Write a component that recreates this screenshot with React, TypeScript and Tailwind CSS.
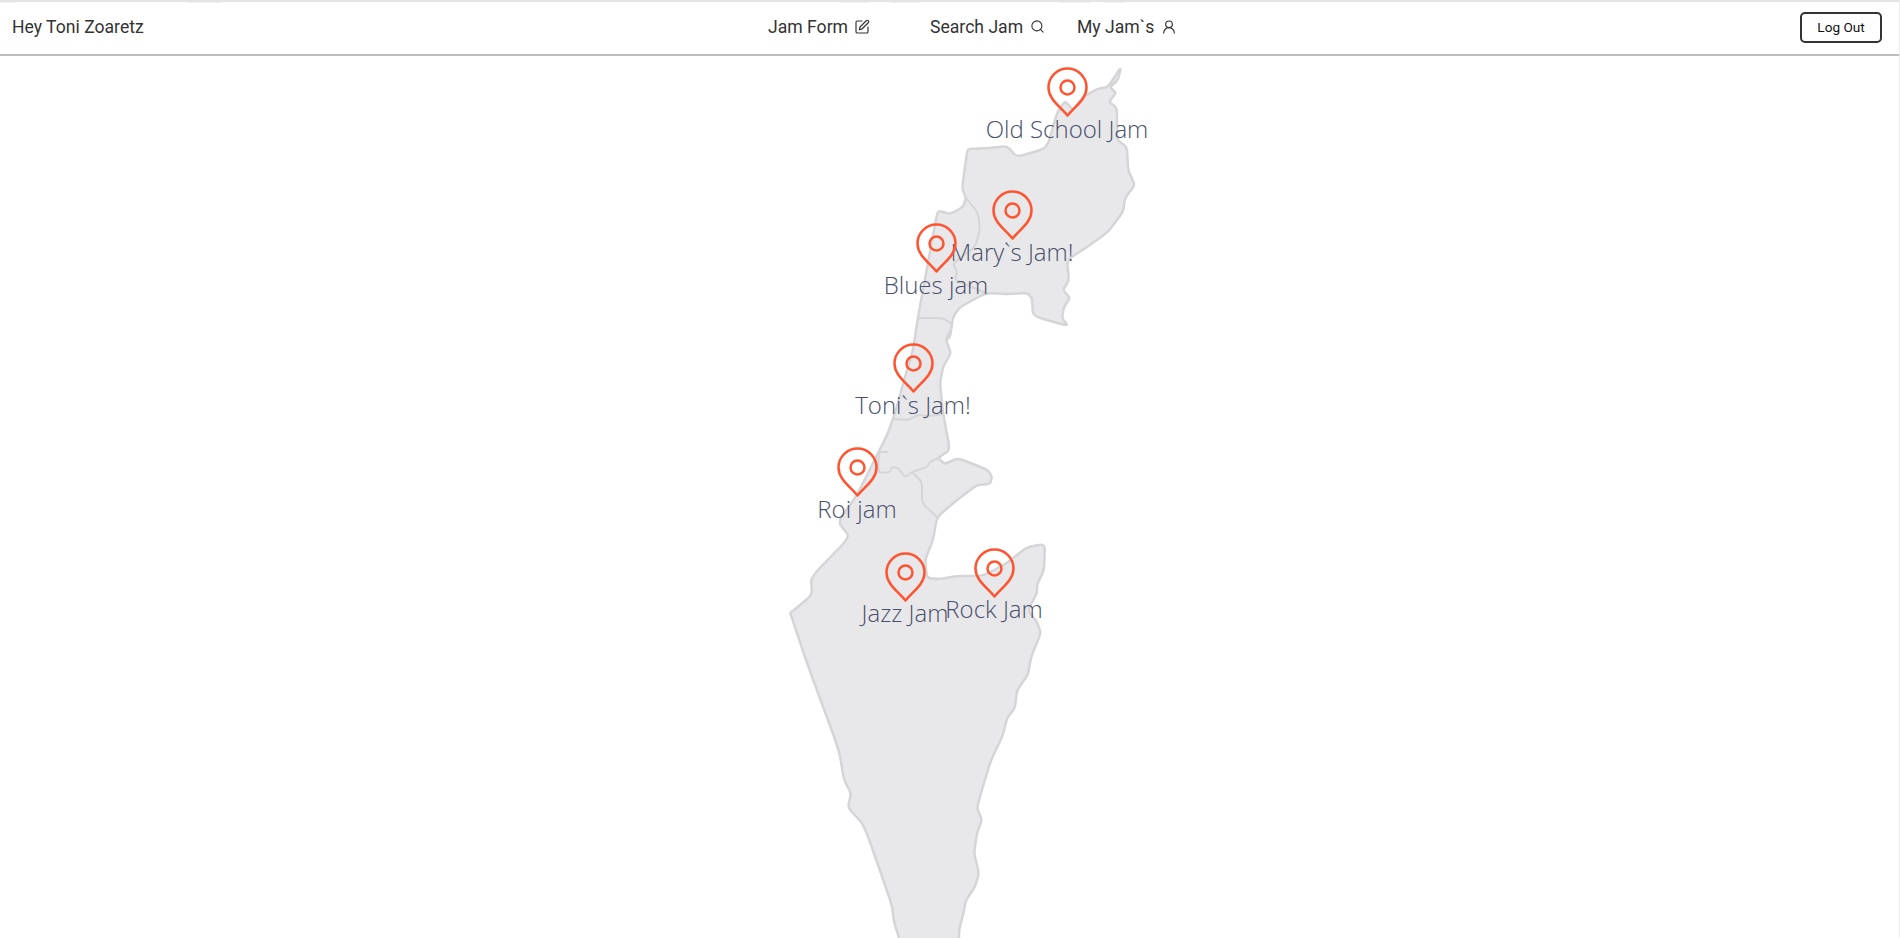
import { Search, SquarePen, UserRound } from "lucide-react";

// outline traced from the reference, in page pixels
const outline: [number, number][] = [
  [1121, 67], [1118, 80], [1110, 87], [1116, 93], [1109, 102], [1117, 108], [1117, 140], [1127, 147],
  [1128, 170], [1135, 185], [1125, 198], [1123, 212], [1108, 232], [1090, 245], [1067, 260], [1069, 280],
  [1063, 290], [1070, 298], [1064, 307], [1062, 318], [1068, 326], [1033, 316], [1032, 298], [1027, 293],
  [1007, 294], [986, 293], [960, 307], [953, 317], [950, 337], [946, 340], [951, 353], [943, 367],
  [940, 383], [943, 413], [950, 450], [938, 458], [945, 464], [958, 458], [988, 470], [992, 477],
  [990, 484], [977, 485], [957, 500], [937, 517], [933, 540], [925, 560], [927, 578], [940, 579],
  [957, 576], [983, 576], [1007, 563], [1027, 547], [1045, 544], [1044, 570], [1037, 585], [1037, 593],
  [1028, 610], [1037, 622], [1041, 633], [1031, 657], [1028, 675], [1017, 690], [1015, 708], [1007, 718],
  [1003, 735], [991, 760], [981, 793], [977, 808], [982, 820], [977, 833], [974, 853], [979, 873],
  [975, 887], [966, 900], [963, 915], [959, 930], [959, 960], [905, 960], [899, 938], [894, 922],
  [892, 905], [864, 825], [848, 808], [851, 793], [844, 780], [839, 750], [807, 663], [792, 618],
  [790, 613], [794, 610], [812, 595], [811, 577], [850, 537], [838, 522], [857, 495], [877, 455], [888, 433],
  [895, 413], [905, 377], [913, 350], [918, 317], [923, 290], [937, 213], [940, 211], [950, 214],
  [963, 207], [966, 198], [962, 188], [967, 153], [968, 149], [990, 148], [1007, 146], [1017, 157],
  [1047, 148], [1057, 113], [1065, 101], [1073, 110], [1083, 97], [1097, 89], [1108, 87],
];

const borders: [number, number][][] = [
  [[966, 198], [978, 213], [980, 230], [975, 247], [953, 263], [957, 272], [955, 280], [986, 293]],
  [[918, 318], [943, 318], [953, 325], [947, 337], [946, 340]],
  [[893, 419], [908, 420], [918, 415], [930, 416], [943, 414]],
  [[888, 452], [879, 452], [878, 468], [880, 473], [890, 472], [892, 467], [898, 468], [905, 477], [912, 472], [927, 467], [930, 462], [938, 458]],
  [[912, 472], [922, 482], [922, 503], [937, 517]],
];

// cut each corner a little so the trace stays close to its points
function trace(pts: [number, number][], closed: boolean) {
  const cut = 0.25;
  const lerp = (a: [number, number], b: [number, number], t: number) =>
    `${a[0] + (b[0] - a[0]) * t} ${a[1] + (b[1] - a[1]) * t}`;
  let d = closed ? `M${lerp(pts[0], pts[1], cut)}` : `M${pts[0][0]} ${pts[0][1]}`;
  const n = pts.length;
  for (let i = 1; i < (closed ? n + 1 : n - 1); i++) {
    const p = pts[i % n];
    d += `L${lerp(p, pts[i - 1], cut)}Q${p[0]} ${p[1]} ${lerp(p, pts[(i + 1) % n], cut)}`;
  }
  return closed ? d + "Z" : d + `L${pts[n - 1][0]} ${pts[n - 1][1]}`;
}

// faint smudges along the top edge of the page
const smudges = [
  { left: 0, width: 15 }, { left: 187, width: 35 }, { left: 840, width: 28 }, { left: 890, width: 30 },
  { left: 1060, width: 30 }, { left: 1105, width: 20 },
];

// x is the pin's centre line, y its top edge, labelY the top of the label box
const jams = [
  { name: "Old School Jam", x: 1067, y: 67, labelY: 113 },
  { name: "Mary`s Jam!", x: 1012, y: 190, labelY: 236 },
  { name: "Blues jam", x: 936, y: 223, labelY: 269 },
  { name: "Toni`s Jam!", x: 913, y: 343, labelY: 389 },
  { name: "Roi jam", x: 857, y: 447, labelY: 493 },
  { name: "Jazz Jam", x: 905, y: 552, labelY: 597 },
  { name: "Rock Jam", x: 994, y: 548, labelY: 593 },
];

function Pin() {
  return (
    <svg width="42" height="50" viewBox="0 0 42 50" fill="none" stroke="#ff5430" strokeWidth="2.5" strokeLinejoin="round">
      <path d="M21.5 48.5C13.5 39 2.5 32 2.5 20.5a19 19 0 0 1 38 0C40.5 32 29.5 39 21.5 48.5Z" />
      <circle cx="21.5" cy="20.5" r="7" />
    </svg>
  );
}

export default function App() {
  return (
    <div className="h-[938px] overflow-hidden border-r border-r-[#ececec] bg-white font-['Roboto',sans-serif]">
      <header className="relative flex h-[56px] items-center border-t-2 border-b-2 border-t-[#e4e4e4] border-b-[#bdbdbd] bg-white pr-[17px] pb-[2px] pl-3 text-[17.6px] text-[#333]">
        {smudges.map((s) => (
          <span key={s.left} className="absolute top-0 h-[1px] bg-[#f1f1f1]" style={{ left: s.left, width: s.width }} />
        ))}
        <span className="w-[756px]">Hey Toni Zoaretz</span>
        <nav className="flex items-center">
          <a className="flex w-[162px] items-center gap-[6px]">
            Jam Form <SquarePen size={16} strokeWidth={1.75} />
          </a>
          <a className="flex w-[147px] items-center gap-[7px]">
            Search Jam <Search size={15} strokeWidth={1.75} />
          </a>
          <a className="flex items-center gap-[7px]">
            My Jam`s <UserRound size={16} strokeWidth={1.75} />
          </a>
        </nav>
        <button className="ml-auto h-[31px] w-[82px] rounded-[5px] border-2 border-[#333] text-[13.6px] text-[#111]">
          Log Out
        </button>
      </header>
      <main className="relative h-[882px] overflow-hidden">
        <svg className="absolute top-[-56px] left-0" width="1900" height="938" viewBox="0 0 1900 938" fill="none">
          <path d={trace(outline, true)} fill="#e8e8ea" stroke="#d5d5d8" strokeWidth="2.5" strokeLinejoin="round" />
          {borders.map((b, i) => (
            <path key={i} d={trace(b, false)} stroke="#d5d5d8" strokeWidth="2" />
          ))}
        </svg>
        {jams.map((j) => (
          <div key={j.name}>
            <div className="absolute -translate-x-1/2" style={{ left: j.x, top: j.y - 56 }}>
              <Pin />
            </div>
            <span
              className="absolute -translate-x-1/2 font-['Open_Sans',sans-serif] text-[24px] leading-[32px] font-light whitespace-nowrap text-[#4a4f6b]"
              style={{ left: j.x, top: j.labelY - 56 }}
            >
              {j.name}
            </span>
          </div>
        ))}
      </main>
    </div>
  );
}
